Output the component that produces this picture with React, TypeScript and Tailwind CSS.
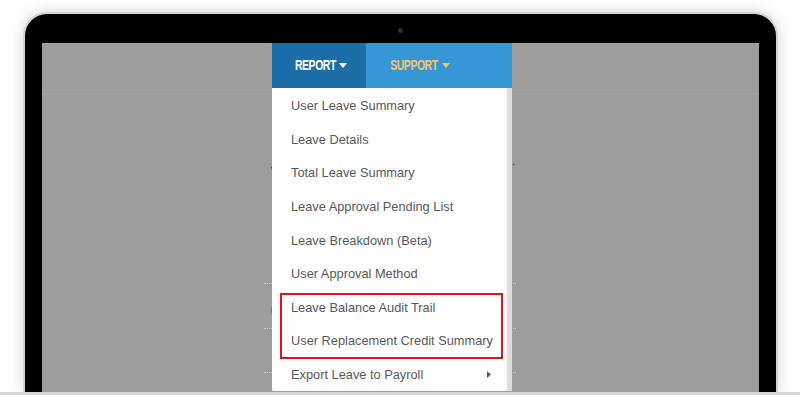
import React from "react";

const items = [
  "User Leave Summary",
  "Leave Details",
  "Total Leave Summary",
  "Leave Approval Pending List",
  "Leave Breakdown (Beta)",
  "User Approval Method",
  "Leave Balance Audit Trail",
  "User Replacement Credit Summary",
];

function Caret({ color }: { color: string }) {
  return (
    <svg width="8" height="5" viewBox="0 0 8 5" className="ml-[4px]">
      <path d="M0 0 L8 0 L4 5 Z" fill={color} />
    </svg>
  );
}

export default function App() {
  return (
    <div
      className="w-[800px] h-[395px] bg-white overflow-hidden flex flex-col"
      style={{ fontFamily: '"Liberation Sans", Arial, sans-serif' }}
    >
      <div className="flex-1 pt-[14px] pl-[25px] overflow-hidden">
        <div className="w-[751px] h-full bg-black rounded-t-[22px] pt-[29px] px-[17px] relative shadow-[0_0_0_2px_#d4d4d4,0_0_16px_rgba(0,0,0,0.22)]">
          <div className="absolute left-[373px] top-[14px] w-[5px] h-[5px] rounded-full bg-[#2e2e2e]" />
          <div className="relative h-full bg-[#9d9d9d]">
            {/* underlying page */}
            <div className="h-[51px] border-b border-[#a4a4a4]" />
            <div className="absolute left-[228px] top-[112px] text-[12px] text-[#24407a]">,</div>
            <div className="absolute left-[467px] top-[109px] text-[12px] text-[#24407a]">l.</div>
            <div className="absolute left-[229px] top-[256px] text-[13px] text-[#222] font-bold">(</div>
            {["top-[240px]", "top-[285px]", "top-[329px]"].map((t) => (
              <div key={t} className={`absolute ${t} left-[222px] w-[252px] border-t border-dotted border-[#c8c8c8]`} />
            ))}

            {/* nav + menu */}
            <div className="absolute left-[230px] top-0 w-[240px]">
              <div className="h-[45px] flex bg-[#3597d5] text-[14.5px] font-bold">
                <div className="w-[94px] bg-[#1b6ea7] flex items-center justify-center text-white pl-[4px]">
                  <span className="inline-block tracking-[-0.6px] scale-x-[0.72] -mx-[8px]">REPORT</span>
                  <Caret color="#ffffff" />
                </div>
                <div className="w-[104px] flex items-center justify-center text-[#f2c46d] pl-[4px]">
                  <span className="inline-block tracking-[-0.6px] scale-x-[0.72] -mx-[9px]">SUPPORT</span>
                  <Caret color="#f2c46d" />
                </div>
              </div>
              <div className="bg-[#dddddd] pr-[5px]">
                <div className="relative bg-white pt-[1px] rounded-b-[3px] text-[12.8px] text-[#595959]">
                  {items.map((it) => (
                    <div key={it} className="h-[33.6px] pl-[19px] flex items-center">
                      {it}
                    </div>
                  ))}
                  <div className="h-[33.6px] pl-[19px] pr-[16px] flex items-center justify-between">
                    <span>Export Leave to Payroll</span>
                    <svg width="4" height="7" viewBox="0 0 4 7">
                      <path d="M0 0 L4 3.5 L0 7 Z" fill="#5b5b5b" />
                    </svg>
                  </div>
                  <div className="absolute left-[8px] top-[205px] w-[223px] h-[66px] border-2 border-[#e3101c]" />
                </div>
              </div>
            </div>
          </div>
        </div>
      </div>
      <div className="h-[3px] bg-[#d6d6d6]" />
    </div>
  );
}
